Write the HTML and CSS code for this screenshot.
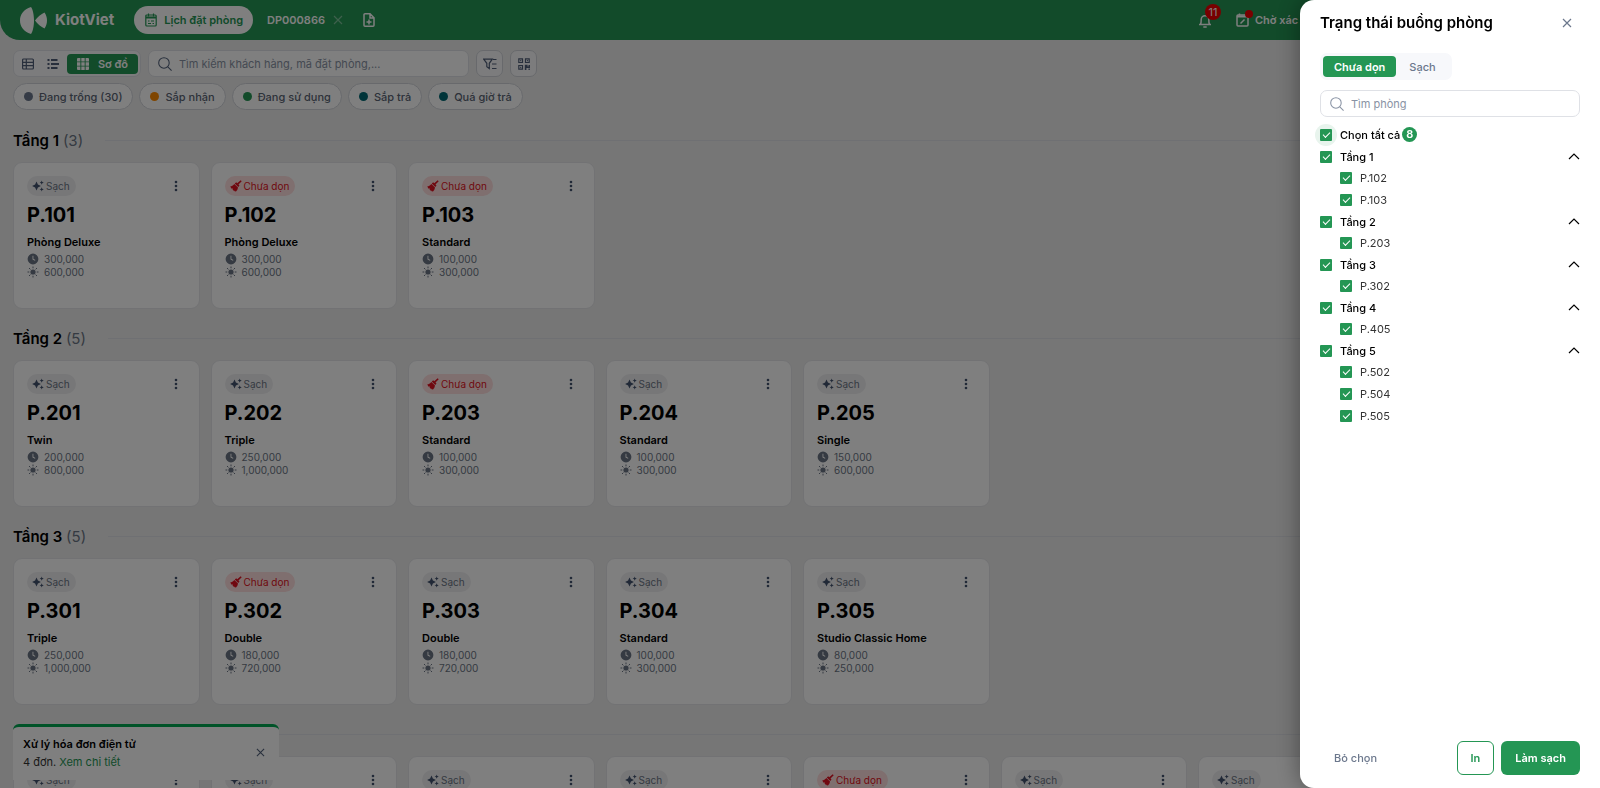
FILE: index.html
```html
<!DOCTYPE html>
<html lang="vi">
<head>
<meta charset="utf-8">
<meta name="viewport" content="width=device-width, initial-scale=1">
<title>KiotViet</title>
<link rel="stylesheet" href="styles.css">
</head>
<body>

<!-- icons used more than once -->
<svg class="sprite" aria-hidden="true">
  <symbol id="i-search" viewBox="0 0 16 16"><circle cx="6.8" cy="6.8" r="6"/><path d="M11.200 11.200L15.500 15.500"/></symbol>
  <symbol id="i-close" viewBox="0 0 10 10"><path d="M1 1l8 8M9 1L1 9"/></symbol>
  <symbol id="i-up" viewBox="0 0 12 7"><path d="M1 6l5-5 5 5"/></symbol>
  <symbol id="i-dots" viewBox="0 0 4 12"><circle cx="2" cy="2" r="1.3"/><circle cx="2" cy="6" r="1.3"/><circle cx="2" cy="10" r="1.3"/></symbol>
  <symbol id="i-clean" viewBox="0 0 12 12"><path d="M4.500 1.600l1.400 3 3 1.400-3 1.400-1.400 3-1.400-3-3-1.400 3-1.400zM9.700.5l.6 1.500 1.500.6-1.500.6-.6 1.500-.6-1.500-1.500-.6 1.500-.6zM9.700 7.300l.6 1.500 1.500.6-1.500.6-.6 1.500-.6-1.500-1.500-.6 1.500-.6z"/></symbol>
  <symbol id="i-dirty" viewBox="0 0 12 12"><path d="M10.700.3l1 1-3.200 3.300 1 1-1.200 1.400-3.500-3.500 1.400-1.200 1 1zM4.400 4l3.600 3.600c-.3 1.800-1 3.200-2.200 4.200L4.500 10.400l0 1.100-1.900-2 .1-1.200-1.100.4L.2 6.600C1.700 6.300 3 5.500 4.400 4z"/></symbol>
  <symbol id="i-clock" viewBox="0 0 12 12"><path fill-rule="evenodd" d="M6 .6a5.400 5.400 0 1 1 0 10.800A5.400 5.400 0 0 1 6 .6zM5.500 2.800v3.600l2.500 1.300.4-.8-2-1.100v-3z"/></symbol>
  <symbol id="i-sun" viewBox="0 0 12 12"><circle cx="6" cy="6" r="2.600"/><path d="M6 .5v1.800M6 9.700v1.800M.5 6h1.800M9.700 6h1.800M2 2l1.400 1.400M8.600 8.600L10 10M10 2L8.600 3.400M3.400 8.600L2 10" fill="none" stroke="currentColor"/></symbol>
</svg>

<header class="topbar">
  <a class="logo" href="#">
    <svg width="27" height="27" viewBox="0 0 27 27"><path d="M11 0C3.500 2.500 0 7.500 0 13.500S3.500 24.500 11 27c1.800-2.500 3-7.500 3-13.500S12.800 2.500 11 0zM15 13.500c2.500-3.500 6-6.500 9.500-8 1.600 2.300 2.500 5 2.500 8s-.9 5.700-2.500 8c-3.500-1.500-7-4.500-9.500-8z"/></svg>
    <span>KiotViet</span>
  </a>
  <a class="tab active" href="#">
    <svg width="12" height="14" viewBox="0 0 12 14" class="line"><rect x=".8" y="2" width="10.400" height="11" rx="1"/><path d="M1 4.500h10" stroke-width="2"/><path d="M3.500.5v3M8.500.5v3M3 8h1.500M6 8h3M3 10.500h3M7.500 10.500H9"/></svg>
    Lịch đặt phòng
  </a>
  <a class="tab" href="#">DP000866 <svg class="line dim" width="10" height="10"><use href="#i-close"/></svg></a>
  <button class="icon-btn add" aria-label="Thêm">
    <svg class="line thin-bold" width="12" height="14" viewBox="0 0 12 14"><path d="M7 .8H2A1 1 0 0 0 1 1.800v10.400a1 1 0 0 0 1 1h8a1 1 0 0 0 1-1V4.800zM7 1v4h4M6 6.500v5M3.500 9h5"/></svg>
  </button>
  <div class="topbar-right">
    <button class="icon-btn bell" aria-label="Thông báo">
      <svg class="line" width="14" height="15" viewBox="0 0 14 15"><path d="M1 11.500h12M2.500 11.500c.6-1 .7-2 .7-5a3.800 3.800 0 0 1 7.600 0c0 3 .1 4 .7 5M5.300 14h3.400"/></svg>
      <span class="count">11</span>
    </button>
    <a class="pending" href="#">
      <span class="pending-icon"><svg class="line" width="13" height="14" viewBox="0 0 13 14"><rect x="1" y="2" width="11" height="11" rx="1"/><path d="M1 3.500h11" stroke-width="2"/><path d="M3.500.5v2M4.500 10.500l4-4"/></svg></span>
      Chờ xác nhận
    </a>
  </div>
</header>

<main class="page">
  <div class="toolbar">
    <div class="views">
      <button aria-label="Bảng"><svg class="line" width="12" height="12" viewBox="0 0 12 12"><rect x=".6" y="1" width="10.800" height="10" rx="1"/><path d="M1 4.300h10M1 7.700h10M4.300 1v10"/></svg></button>
      <button aria-label="Danh sách"><svg class="line thick" width="12" height="12" viewBox="0 0 12 12"><path d="M.5 2h2M4 2h6.500M.5 6h2M4 6h8M.5 10h2M4 10h6.500"/></svg></button>
      <button class="on"><svg width="12" height="12" viewBox="0 0 12 12"><path d="M0 1a1 1 0 0 1 1-1h2.400v3.400H0zM4.300 0h3.400v3.400H4.300zM8.600 0H11a1 1 0 0 1 1 1v2.400H8.600zM0 4.300h3.400v3.400H0zM4.300 4.300h3.400v3.400H4.300zM8.600 4.300H12v3.400H8.600zM0 8.600h3.400V12H1a1 1 0 0 1-1-1zM4.300 8.600h3.400V12H4.300zM8.600 8.600H12V11a1 1 0 0 1-1 1H8.600z"/></svg>Sơ đồ</button>
    </div>
    <label class="search">
      <svg class="line" width="14" height="14"><use href="#i-search"/></svg>
      <input type="text" aria-label="Tìm kiếm" placeholder="Tìm kiếm khách hàng, mã đặt phòng,...">
    </label>
    <button class="square" aria-label="Lọc"><svg class="line" width="14" height="12" viewBox="0 0 14 12"><path d="M.7 1.200h8.600L6.300 5.300v5.200l-2.500-1.800V5.300zM10 1.500h3.500M9 6h4.500M9 10.500h4.500"/></svg></button>
    <button class="square" aria-label="Mã QR"><svg class="line" width="12" height="12" viewBox="0 0 12 12"><path d="M.8.8h3.700v3.700H.8zM7.500.8h3.700v3.700H7.500zM.8 7.500h3.700v3.700H.8zM2.200 2.700h1M8.900 2.700h1M2.200 9.400h1"/><path d="M7.600 12V7.600h1.200v1.600h2.500V7M10.500 11.300h1.300" stroke-width="1.600"/></svg></button>
  </div>

  <div class="filters">
    <button><i class="dot gray"></i>Đang trống (30)</button>
    <button><i class="dot orange"></i>Sắp nhận</button>
    <button><i class="dot green"></i>Đang sử dụng</button>
    <button><i class="dot teal"></i>Sắp trả</button>
    <button><i class="dot teal"></i>Quá giờ trả</button>
  </div>

  <div id="floors"></div>
</main>

<div class="notice">
  <div>
    <b>Xử lý hóa đơn điện tử</b>
    <p>4 đơn. <a href="#">Xem chi tiết</a></p>
  </div>
  <button class="icon-btn" aria-label="Đóng"><svg class="line" width="9" height="9"><use href="#i-close"/></svg></button>
</div>

<div class="overlay"></div>

<aside class="drawer">
  <div class="drawer-head">
    <h2>Trạng thái buồng phòng</h2>
    <button class="icon-btn" aria-label="Đóng"><svg class="line" width="10" height="10"><use href="#i-close"/></svg></button>
  </div>
  <div class="switch">
    <button class="on">Chưa dọn</button>
    <button>Sạch</button>
  </div>
  <label class="search">
    <svg class="line" width="14" height="14"><use href="#i-search"/></svg>
    <input type="text" aria-label="Tìm phòng" placeholder="Tìm phòng">
  </label>
  <div id="tree" class="tree">
    <label class="all"><input type="checkbox" checked>Chọn tất cả<span class="total">8</span></label>
  </div>
  <div class="drawer-foot">
    <button class="clear">Bỏ chọn</button>
    <button class="outline">In</button>
    <button class="primary">Làm sạch</button>
  </div>
</aside>

<script src="script.js"></script>
</body>
</html>
```
FILE: styles.css
```css
* {
  box-sizing: border-box;
}

body {
  margin: 0;
  height: 100vh;
  overflow: hidden;
  background: #ededed;
  color: #000;
  font-family: Inter, "Liberation Sans", sans-serif;
  font-size: 11px;
  line-height: 16px;
}

button, input {
  font: inherit;
  color: inherit;
}

button {
  display: flex;
  align-items: center;
  justify-content: center;
  padding: 0;
  border: none;
  background: none;
  cursor: pointer;
}

a {
  color: inherit;
  text-decoration: none;
}

h2, h3, h4, p {
  margin: 0;
}

svg {
  flex: none;
  fill: currentColor;
}

.line {
  fill: none;
  stroke: currentColor;
  stroke-width: 1.2;
}

.thin-bold {
  stroke-width: 1.5;
}

.thick {
  stroke-width: 2;
}

.sprite {
  display: none;
}

/* Top bar */
.topbar {
  display: flex;
  align-items: center;
  height: 40px;
  padding: 0 18px 0 20px;
  background: #249654;
  border-radius: 0 0 0 20px;
  color: #fff;
  font-weight: 600;
}

.logo {
  display: flex;
  align-items: center;
  gap: 8px;
  margin-right: 20px;
  font-size: 15px;
  font-weight: 700;
}

.tab {
  display: flex;
  align-items: center;
  gap: 8px;
  height: 28px;
  padding: 0 14px;
}

.tab.active {
  gap: 7px;
  padding: 0 10px 0 11px;
  border-radius: 14px;
  background: #fff;
  color: #249654;
}

.dim {
  opacity: .4;
}

.add {
  margin-left: 6px;
}

.topbar-right {
  display: flex;
  gap: 24px;
  margin-left: auto;
  width: 384px;
}

.topbar-right .line {
  stroke-width: 1.5;
}

.bell {
  position: relative;
}

.count {
  position: absolute;
  top: -8px;
  left: 7px;
  width: 16px;
  border-radius: 8px;
  background: #f00000;
  font-weight: 400;
  text-align: center;
}

.pending {
  display: flex;
  align-items: center;
  gap: 6px;
}

.pending-icon {
  position: relative;
  display: flex;
}

.pending-icon::after {
  content: "";
  position: absolute;
  top: -3px;
  right: -4px;
  width: 8px;
  height: 8px;
  border-radius: 50%;
  background: #f00000;
}

/* Toolbar and filters */
.page {
  padding: 10px 18px 0 13px;
}

.toolbar {
  display: flex;
  gap: 7px;
}

.views {
  display: flex;
  align-items: center;
  width: 128px;
  height: 27px;
  padding: 0 2px 0 1px;
  border: 1px solid #dfe1e6;
  border-radius: 7px;
  background: #f9f9fa;
  color: #505f79;
}

.views button {
  width: 25px;
  height: 20px;
}

.views .on {
  flex: 1;
  gap: 9px;
  margin-left: 2px;
  border-radius: 4px;
  background: #249654;
  color: #fff;
  font-weight: 600;
}

.search {
  display: flex;
  align-items: center;
  gap: 7px;
  height: 27px;
  padding: 0 9px;
  border: 1px solid #dfe1e6;
  border-radius: 7px;
  background: #fff;
  color: #8993a4;
}

.search input {
  flex: 1;
  min-width: 0;
  padding: 0;
  border: none;
  outline: none;
  background: none;
}

.search input::placeholder {
  color: #8993a4;
  opacity: 1;
}

.toolbar .search {
  flex: 0 1 321px;
}

.toolbar .search svg {
  color: #505f79;
}

.square {
  width: 27px;
  height: 27px;
  border: 1px solid #d0d3d9;
  border-radius: 7px;
  background: #f9f9fa;
  color: #505f79;
}

.filters {
  display: flex;
  gap: 6px;
  margin-top: 6px;
}

.filters button {
  gap: 6px;
  height: 27px;
  padding: 0 10px;
  border: 1px solid #d0d3d9;
  border-radius: 14px;
  background: #fff;
  color: #5a6474;
  font-weight: 500;
}

.dot {
  width: 9px;
  height: 9px;
  border-radius: 50%;
}

.gray { background: #6b778c; }
.orange { background: #ff8b00; }
.green { background: #249654; }
.teal { background: #006873; }

/* Floors */
.floor-head {
  display: flex;
  align-items: center;
  gap: 22px;
  height: 51px;
  padding-top: 8px;
}

.floor-head h3 {
  font-size: 15px;
  font-weight: 600;
}

.floor-head span {
  color: #6b7584;
  font-weight: 400;
}

.floor-head::after {
  content: "";
  flex: 1;
  height: 1px;
  background: #dfe1e6;
}

#floors {
  padding-top: 1px;
}

.rooms {
  display: grid;
  grid-template-columns: repeat(auto-fill, minmax(180px, 1fr));
  gap: 11px;
}

.room {
  height: 147px;
  padding: 13px;
  border: 1px solid #e4e5e8;
  border-radius: 9px;
  background: #fff;
}

.room-top {
  display: flex;
  align-items: center;
  justify-content: space-between;
}

.room-top button {
  width: 20px;
  color: #42526e;
}

.badge {
  display: flex;
  align-items: center;
  gap: 2px;
  height: 20px;
  padding: 0 6px 0 5px;
  border-radius: 10px;
  background: #efeff1;
  color: #6b7584;
}

.badge svg {
  color: #42526e;
}

.badge.dirty, .badge.dirty svg {
  color: #e01020;
}

.badge.dirty {
  background: #ffdede;
}

.badge, .price {
  font-size: 10px;
}

.room h4 {
  margin: 7px 0;
  font-size: 20px;
  line-height: 24px;
  font-weight: 700;
}

.room b {
  display: block;
  margin-bottom: 2px;
  font-weight: 600;
}

.price {
  display: flex;
  align-items: center;
  gap: 5px;
  height: 13px;
  color: #6b7584;
}

/* Bottom-left notice */
.notice {
  position: fixed;
  left: 13px;
  bottom: 8px;
  display: flex;
  align-items: center;
  justify-content: space-between;
  width: 266px;
  height: 56px;
  padding: 0 14px 2px 10px;
  border-top: 3px solid #00a651;
  border-radius: 6px 6px 0 0;
  background: #fff;
}

.notice b {
  font-weight: 600;
}

.notice p {
  margin-top: 2px;
  color: #333;
}

.notice a {
  color: #249654;
}

.notice button {
  color: #505f79;
}

.overlay {
  position: fixed;
  inset: 0;
  background: rgba(0, 0, 0, .5);
}

/* Drawer */
.drawer {
  position: fixed;
  top: 0;
  right: 0;
  bottom: 0;
  display: flex;
  flex-direction: column;
  width: 300px;
  padding: 12px 20px 13px;
  border-radius: 14px 0 0 14px;
  background: #fff;
  box-shadow: 0 0 24px rgba(0, 0, 0, .4);
}

.drawer-head {
  display: flex;
  align-items: center;
  justify-content: space-between;
  padding-right: 8px;
  color: #6b778c;
}

.drawer-head h2 {
  color: #000;
  font-size: 15px;
  line-height: 22px;
  font-weight: 600;
}

.switch {
  display: flex;
  align-self: flex-start;
  margin: 19px 0 10px;
  padding: 3px;
  border-radius: 7px;
  background: #f7f8fb;
}

.switch button {
  height: 21px;
  padding: 0 13px;
  border-radius: 4px;
  color: #6b778c;
  font-weight: 500;
}

.switch .on {
  padding: 0 11px;
  background: #249654;
  color: #fff;
  font-weight: 600;
}

.tree {
  flex: 1;
  margin-top: 6px;
  isolation: isolate;
}

.tree label {
  display: flex;
  align-items: center;
  gap: 8px;
}

.tree input {
  appearance: none;
  display: grid;
  place-items: center;
  width: 12px;
  height: 12px;
  margin: 0;
  border-radius: 1px;
  background: #249654;
}

.tree input::after {
  content: "";
  width: 6px;
  height: 3px;
  margin-bottom: 2px;
  border: solid #fff;
  border-width: 0 0 1px 1px;
  transform: rotate(-45deg);
}

.tree .all {
  height: 23px;
  font-weight: 500;
}

/* soft ring behind the focused box */
.all input {
  position: relative;
}

.all input::before {
  content: "";
  position: absolute;
  inset: -5px;
  z-index: -1;
  border-radius: 50%;
  background: #e8f4ed;
}

.total {
  width: 15px;
  height: 15px;
  margin-left: -6px;
  border-radius: 50%;
  background: #249654;
  color: #fff;
  line-height: 15px;
  font-weight: 600;
  text-align: center;
}

.group-head {
  display: flex;
  align-items: center;
  justify-content: space-between;
  height: 21px;
}

.group-head label {
  font-weight: 500;
}

.tree .child {
  height: 22px;
  padding-left: 20px;
  color: #333;
}

.drawer-foot {
  display: flex;
  gap: 7px;
  font-weight: 600;
}

.drawer-foot button {
  height: 34px;
  padding: 0 14px;
  border-radius: 6px;
}

.drawer-foot .clear {
  margin-right: auto;
  color: #6b778c;
  font-weight: 500;
}

.drawer-foot .outline {
  padding: 0 13px;
  border: 1px solid #249654;
  color: #249654;
}

.drawer-foot .primary {
  background: #249654;
  color: #fff;
}
```
FILE: script.js
```js
// room: name, type, hourly price, daily price, needs cleaning
var floors = [
  { name: "Tầng 1", rooms: [
    ["P.101", "Phòng Deluxe", "300,000", "600,000", 0],
    ["P.102", "Phòng Deluxe", "300,000", "600,000", 1],
    ["P.103", "Standard", "100,000", "300,000", 1]
  ]},
  { name: "Tầng 2", rooms: [
    ["P.201", "Twin", "200,000", "800,000", 0],
    ["P.202", "Triple", "250,000", "1,000,000", 0],
    ["P.203", "Standard", "100,000", "300,000", 1],
    ["P.204", "Standard", "100,000", "300,000", 0],
    ["P.205", "Single", "150,000", "600,000", 0]
  ]},
  { name: "Tầng 3", rooms: [
    ["P.301", "Triple", "250,000", "1,000,000", 0],
    ["P.302", "Double", "180,000", "720,000", 1],
    ["P.303", "Double", "180,000", "720,000", 0],
    ["P.304", "Standard", "100,000", "300,000", 0],
    ["P.305", "Studio Classic Home", "80,000", "250,000", 0]
  ]},
  { name: "Tầng 4", rooms: [
    ["P.401", "", "", "", 0], ["P.402", "", "", "", 0],
    ["P.403", "", "", "", 0], ["P.404", "", "", "", 0],
    ["P.405", "", "", "", 1], ["P.406", "", "", "", 0],
    ["P.407", "", "", "", 0]
  ]}
];

var dirtyRooms = {
  "Tầng 1": ["P.102", "P.103"],
  "Tầng 2": ["P.203"],
  "Tầng 3": ["P.302"],
  "Tầng 4": ["P.405"],
  "Tầng 5": ["P.502", "P.504", "P.505"]
};

function icon(name, w, h) {
  return '<svg width="' + w + '" height="' + h + '"><use href="#i-' + name + '"/></svg>';
}

function roomCard(r) {
  var badge = r[4] ? '<span class="badge dirty">' + icon("dirty", 12, 12) + 'Chưa dọn</span>'
                   : '<span class="badge">' + icon("clean", 12, 12) + 'Sạch</span>';
  var html = '<div class="room"><div class="room-top">' + badge +
    '<button aria-label="Tùy chọn">' + icon("dots", 4, 12) + '</button></div>' +
    '<h4>' + r[0] + '</h4>';
  if (r[1]) {
    html += '<b>' + r[1] + '</b>' +
      '<div class="price">' + icon("clock", 12, 12) + r[2] + '</div>' +
      '<div class="price">' + icon("sun", 12, 12) + r[3] + '</div>';
  }
  return html + '</div>';
}

document.getElementById("floors").innerHTML = floors.map(function (f) {
  return '<section><div class="floor-head"><h3>' + f.name + ' <span>(' + f.rooms.length + ')</span></h3></div>' +
    '<div class="rooms">' + f.rooms.map(roomCard).join("") + '</div></section>';
}).join("");

var tree = "";
for (var name in dirtyRooms) {
  tree += '<div class="group-head"><label><input type="checkbox" checked>' + name + '</label>' +
    '<button aria-label="Thu gọn"><svg class="line" width="12" height="7"><use href="#i-up"/></svg></button></div>';
  dirtyRooms[name].forEach(function (room) {
    tree += '<label class="child"><input type="checkbox" checked>' + room + '</label>';
  });
}
document.getElementById("tree").insertAdjacentHTML("beforeend", tree);
```
